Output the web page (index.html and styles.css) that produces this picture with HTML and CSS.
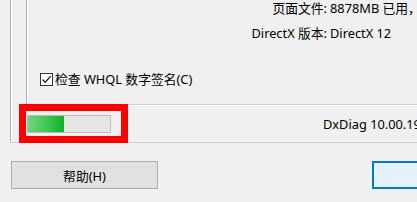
FILE: index.html
```html
<!DOCTYPE html>
<html lang="zh-CN">
<head>
<meta charset="utf-8">
<link rel="stylesheet" href="styles.css">
</head>
<body>
<div class="page">
  <div class="tab">
    <div class="group">
      <div class="info">
        <span class="label">页面文件:</span><span class="value">8878MB 已用，</span>
        <span class="label">DirectX 版本:</span><span class="value">DirectX 12</span>
      </div>
      <label class="check">
        <span class="box"><svg width="11" height="11" viewBox="0 0 11 11"><path d="M1.5 5.5 L4.2 8.3 L9.6 2.2" fill="none" stroke="#1c2a3a" stroke-width="1.3"/></svg></span>
        <span class="check-text">检查 WHQL 数字签名(C)</span>
      </label>
    </div>
    <div class="status">
      <div class="progress"><div class="fill" style="width:36px"></div></div>
      <span class="version">DxDiag 10.00.19</span>
    </div>
  </div>
  <div class="buttons">
    <button class="btn">帮助(H)</button>
    <button class="btn btn-default"></button>
  </div>
  <div class="highlight"></div>
</div>
</body>
</html>
```
FILE: styles.css
```css
html, body {
  margin: 0;
  padding: 0;
}
body {
  width: 417px;
  height: 202px;
  overflow: hidden;
  background: #f0f0f0;
  font-family: "Noto Sans", "Noto Sans CJK SC", sans-serif;
  font-size: 12.8px;
  color: #000;
}
.page {
  position: relative;
  width: 417px;
  height: 202px;
}
.tab {
  margin-left: 10px;
  width: 520px;
  height: 143px;
  box-sizing: border-box;
  border-left: 1px solid #b0b0b0;
  border-bottom: 1px solid #cfcfcf;
  box-shadow: inset 1px 0 0 #fff;
}
.group {
  margin-left: 15px;
  height: 105px;
  box-sizing: border-box;
  border-left: 1px solid #b0b0b0;
  border-bottom: 1px solid #cfcfcf;
  box-shadow: inset 1px 0 0 #fff, 0 1px 0 #fff;
}
.info {
  display: grid;
  grid-template-columns: 300px auto;
  column-gap: 3px;
  row-gap: 9px;
  line-height: 16px;
  white-space: nowrap;
}
.label {
  text-align: right;
}
.check {
  display: flex;
  align-items: center;
  gap: 2px;
  margin-top: 30px;
  margin-left: 13px;
  height: 16px;
  line-height: 16px;
}
.box {
  flex: none;
  width: 13px;
  height: 13px;
  box-sizing: border-box;
  border: 1px solid #333;
  background: #fff;
  display: flex;
  align-items: center;
  justify-content: center;
}
.box svg {
  display: block;
}
.status {
  display: flex;
  align-items: center;
  height: 37px;
}
.progress {
  flex: none;
  margin-left: 16px;
  width: 84px;
  height: 18px;
  box-sizing: border-box;
  border: 1px solid #bcbcbc;
  background: #e6e6e6;
}
.fill {
  height: 100%;
  background: linear-gradient(to right, #72d47e, #3cc552 55%, #0fb02b);
}
.version {
  flex: none;
  margin-left: 212px;
  white-space: nowrap;
}
.buttons {
  display: flex;
  gap: 214px;
  padding-left: 11px;
  margin-top: 18px;
}
.btn {
  flex: none;
  width: 147px;
  height: 28px;
  box-sizing: border-box;
  border: 1px solid #adadad;
  background: #e1e1e1;
  font-family: inherit;
  font-size: 12.8px;
  color: #000;
  padding: 0;
}
.btn-default {
  border: 2px solid #0078d7;
  background: #e5f1fb;
}
.highlight {
  position: absolute;
  left: 19px;
  top: 104px;
  width: 109px;
  height: 39px;
  box-sizing: border-box;
  border: 7px solid #ff0000;
}
```
